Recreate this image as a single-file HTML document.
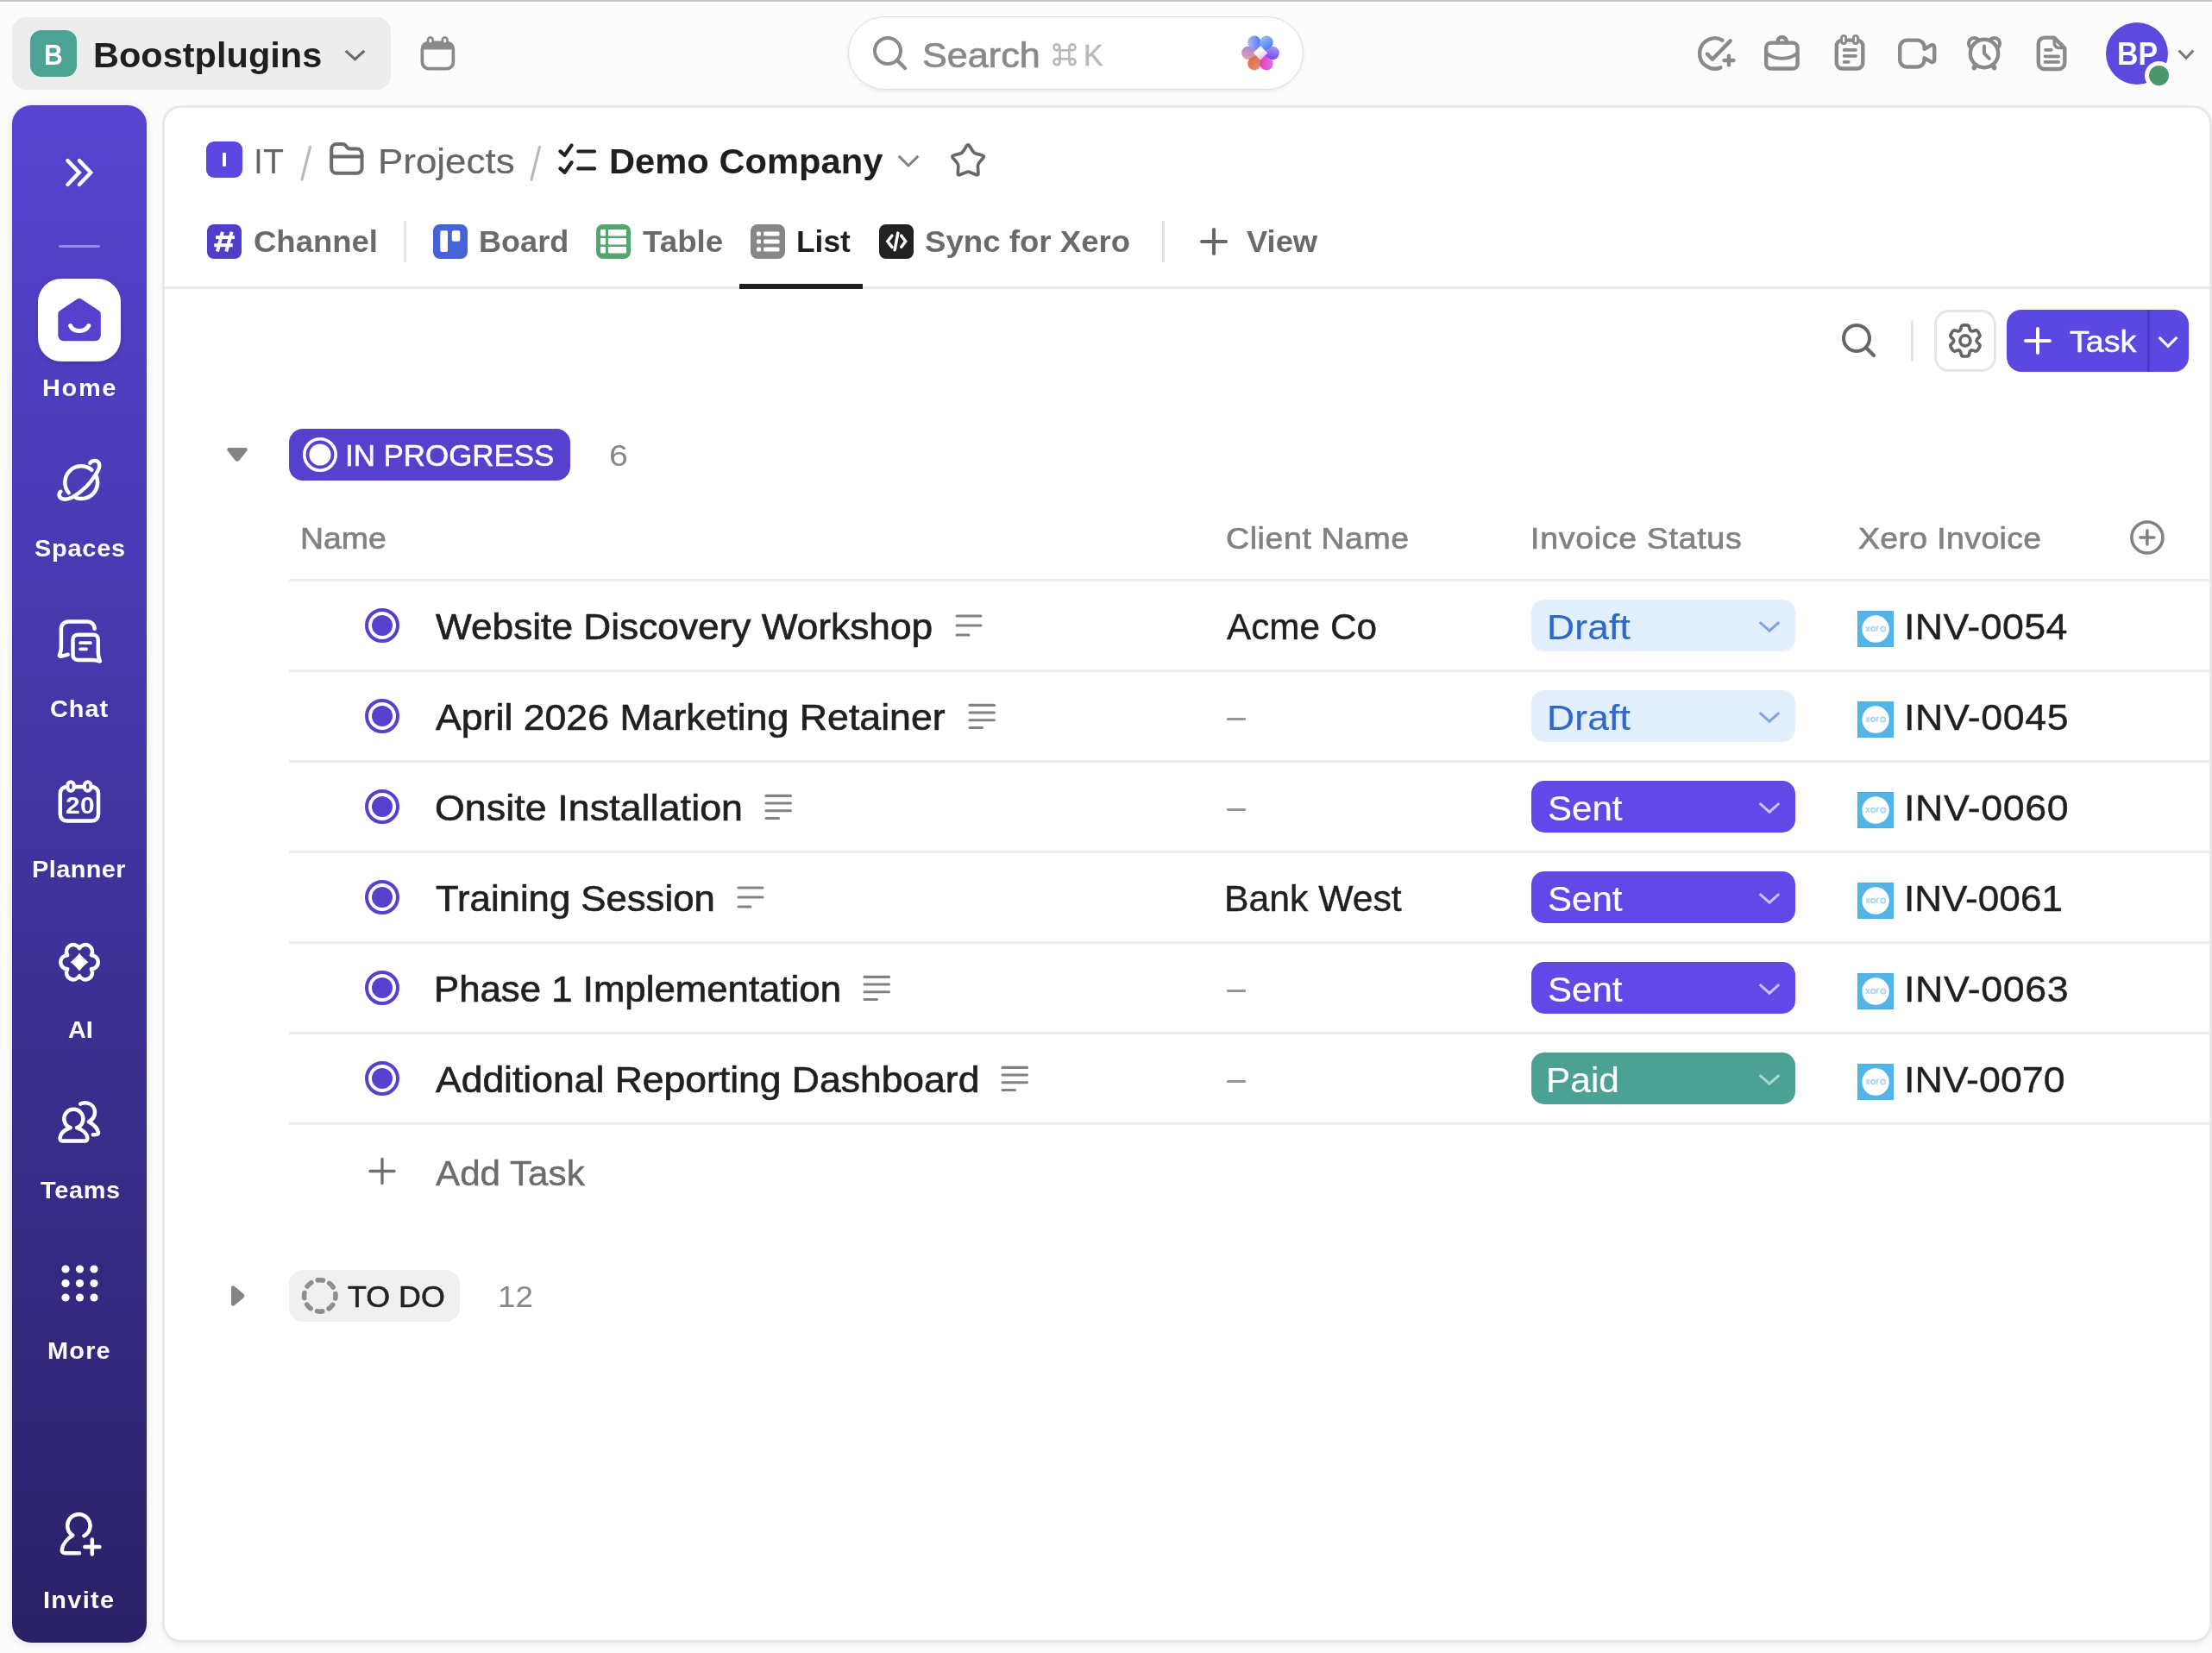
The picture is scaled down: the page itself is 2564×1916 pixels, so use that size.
<!DOCTYPE html>
<html lang="en"><head><meta charset="utf-8"><title>Demo Company - List</title>
<style>
*{box-sizing:border-box;margin:0;padding:0}
html,body{width:2564px;height:1916px;overflow:hidden;background:#fcfcfc;font-family:"Liberation Sans",sans-serif;}
#root{position:absolute;left:0;top:0;width:2564px;height:1916px;will-change:transform}
.a{position:absolute}
.t{position:absolute;white-space:nowrap;line-height:1;transform-origin:0 0;font-family:"Liberation Sans",sans-serif;}
.i{position:absolute;overflow:visible}
#topline{left:0;top:0;width:2564px;height:2px;background:#c5c6c8;box-shadow:0 1px 0 #fff}
#ws{left:14px;top:20px;width:439px;height:84px;border-radius:16px;background:#ededed}
#wsav{left:35px;top:35px;width:54px;height:54px;border-radius:13px;background:#4ba393}
#search{left:983px;top:19px;width:528px;height:85px;border-radius:43px;background:#fff;border:1.5px solid #dcdcdc;box-shadow:0 2px 5px rgba(0,0,0,.07)}
#avatar{left:2441px;top:26px;width:72px;height:72px;border-radius:50%;background:#5c4ade}
#online{left:2485.8px;top:70.8px;width:33.2px;height:33.2px;border-radius:50%;background:#4c966c;border:5.9px solid #fcfcfc}
#sidebar{left:14px;top:122px;width:156px;height:1782px;border-radius:22px;background:linear-gradient(180deg,#5644d1 0%,#2a2167 100%);box-shadow:0 1px 10px rgba(0,0,0,.11)}
#sbdiv{left:68px;top:284px;width:48px;height:3px;border-radius:2px;background:#9a8ce6}
#hometile{left:44px;top:323px;width:96px;height:96px;border-radius:27px;background:#fff;box-shadow:0 2px 6px rgba(0,0,0,.15)}
#panel{left:188px;top:122px;width:2376px;height:1782px;border-radius:22px;background:#fff;border:3px solid #e8e8e8;box-shadow:0 3px 6px rgba(0,0,0,.05)}
#spbadge{left:239px;top:164px;width:42px;height:42px;border-radius:9px;background:#5c48e0}
#spI{left:258px;top:177px;width:4px;height:16px;background:#fff;border-radius:1px}
#tabline{left:191px;top:332px;width:2370px;height:3px;background:#e8e8e8}
#tabactive{left:857px;top:329px;width:143px;height:6px;background:#1f1f1f}
.vsep{width:3px;background:#e4e4e4;border-radius:1px}
#setbtn{left:2242px;top:359px;width:72px;height:72px;border-radius:17px;border:3px solid #e6e6e6;background:#fff}
#taskbtn{left:2326px;top:359px;width:211px;height:72px;border-radius:17px;background:#5b48e0}
#taskdiv{left:2489px;top:359px;width:3px;height:72px;background:#4a39c4}
#ippill{left:335px;top:497px;width:326px;height:60px;border-radius:16px;background:#5541cd}
#tdpill{left:335px;top:1472px;width:198px;height:60px;border-radius:16px;background:#f0f0f0}
.hl{left:335px;width:2226px;height:3px;background:#ededed}
.pill{left:1775px;width:306px;height:60px;border-radius:15px}
.draft{background:#e4effd}.sent{background:#6248e6}.paid{background:#4ba294}
.dash{left:1422px;width:22px;height:3.4px;background:#959595;border-radius:1px}
</style></head>
<body>
<div id="root">
<div id="topline" class="a"></div>
<header>
<div id="ws" class="a"></div><div id="wsav" class="a"></div>
<div id="search" class="a"></div>
<div id="avatar" class="a"></div><div id="online" class="a"></div>
<span class="t" style="left:51.08px;top:47px;font-size:33.2px;font-weight:700;color:#fff;letter-spacing:0.000px;transform:scaleX(0.9095);">B</span>
<span class="t" style="left:107.79px;top:44px;font-size:41.4px;font-weight:700;color:#1f1f1f;letter-spacing:-0.000px;transform:scaleX(1.0031);">Boostplugins</span>
<span class="t" style="left:1068.95px;top:44px;font-size:41px;font-weight:400;color:#8a8a8a;letter-spacing:-0.000px;transform:scaleX(1.0523);-webkit-text-stroke:0.7px #8a8a8a;">Search</span>
<span class="t" style="left:1256.02px;top:47px;font-size:34.5px;font-weight:400;color:#b9b9b9;letter-spacing:0.000px;transform:scaleX(0.9881);-webkit-text-stroke:0.4px #b9b9b9;">K</span>
<span class="t" style="left:2453.71px;top:45px;font-size:36px;font-weight:700;color:#fff;letter-spacing:0.000px;transform:scaleX(0.9426);">BP</span>
<svg class="i" style="left:398px;top:56px" width="27" height="17" viewBox="0 0 27 17" ><path d="M2.600 2.900 L13.500 12.700 L24.400 2.900" fill="none" stroke="#6b6b6b" stroke-width="3.200" stroke-linecap="butt" stroke-linejoin="miter"/></svg>
<svg class="i" style="left:486px;top:41px" width="43" height="42" viewBox="0 0 43 42" >
      <rect x="3.4" y="8.4" width="36" height="30.2" rx="7.5" fill="none" stroke="#8a8a8a" stroke-width="3.7"/>
      <path d="M3.4 16.5 v-1 a7.5 7.5 0 0 1 7.5 -7.5 h21 a7.5 7.5 0 0 1 7.5 7.5 v1 z" fill="#8a8a8a"/>
      <rect x="10.1" y="2.3" width="5.6" height="7.6" rx="2.8" fill="#fcfcfc" stroke="#8a8a8a" stroke-width="2.7"/>
      <rect x="26.9" y="2.3" width="5.6" height="7.6" rx="2.8" fill="#fcfcfc" stroke="#8a8a8a" stroke-width="2.7"/></svg>
<svg class="i" style="left:1010px;top:40px" width="44" height="44" viewBox="0 0 44 44" >
      <circle cx="19" cy="19" r="15" fill="none" stroke="#8a8a8a" stroke-width="4"/>
      <path d="M30 30 L39 39" stroke="#8a8a8a" stroke-width="4.2" stroke-linecap="round"/></svg>
<svg class="i" style="left:1219px;top:50px" width="30" height="27" viewBox="0 0 30 27" >
      <g fill="none" stroke="#b9b9b9" stroke-width="2.7">
      <rect x="9.6" y="8.3" width="10.8" height="10"/>
      <circle cx="6" cy="4.900" r="3.500"/><circle cx="24" cy="4.900" r="3.500"/>
      <circle cx="6" cy="21.700" r="3.500"/><circle cx="24" cy="21.700" r="3.500"/></g></svg>
<svg class="i" style="left:1436px;top:38px" width="50" height="47" viewBox="0 0 50 47" ><defs><linearGradient id="fp5" gradientUnits="objectBoundingBox" x1="0.6" y1="0" x2="0.3" y2="1"><stop offset="0" stop-color="#b07fd4"/><stop offset="1" stop-color="#dba3a6"/></linearGradient><linearGradient id="fp4" gradientUnits="objectBoundingBox" x1="0.2" y1="0" x2="0.8" y2="1"><stop offset="0" stop-color="#d6672f"/><stop offset="1" stop-color="#e98d80"/></linearGradient><linearGradient id="fp0" gradientUnits="objectBoundingBox" x1="0" y1="0.5" x2="1" y2="0.5"><stop offset="0" stop-color="#b3b0f8"/><stop offset="1" stop-color="#4a7df0"/></linearGradient><linearGradient id="fp3" gradientUnits="objectBoundingBox" x1="0" y1="0.5" x2="1" y2="0.5"><stop offset="0" stop-color="#ea38b8"/><stop offset="1" stop-color="#d478f2"/></linearGradient><linearGradient id="fp2" gradientUnits="objectBoundingBox" x1="0.7" y1="0" x2="0.4" y2="1"><stop offset="0" stop-color="#a09cf6"/><stop offset="1" stop-color="#7a3ff0"/></linearGradient><linearGradient id="fp1" gradientUnits="objectBoundingBox" x1="0.2" y1="0" x2="0.7" y2="1"><stop offset="0" stop-color="#9cc0fb"/><stop offset="1" stop-color="#356ff0"/></linearGradient><linearGradient id="fst" x1="0.2" y1="0.1" x2="0.8" y2="0.9"><stop offset="0" stop-color="#fff"/><stop offset="0.5" stop-color="#f4f0ff"/><stop offset="1" stop-color="#e3b6e6"/></linearGradient></defs><path d="M24.70 23.40 L15.07 29.81 A7.7 7.7 0 1 1 15.07 16.99 Z" fill="url(#fp5)"/><path d="M24.85 23.66 L25.58 35.21 A7.7 7.7 0 1 1 14.48 28.80 Z" fill="url(#fp4)"/><path d="M24.85 23.14 L14.48 18.00 A7.7 7.7 0 1 1 25.58 11.59 Z" fill="url(#fp0)"/><path d="M25.15 23.66 L35.52 28.80 A7.7 7.7 0 1 1 24.42 35.21 Z" fill="url(#fp3)"/><path d="M25.30 23.40 L34.93 16.99 A7.7 7.7 0 1 1 34.93 29.81 Z" fill="url(#fp2)"/><path d="M25.15 23.14 L24.42 11.59 A7.7 7.7 0 1 1 35.52 18.00 Z" fill="url(#fp1)"/><path d="M25 14.999999999999998 C27.6 18.0 30.4 20.799999999999997 33.4 23.4 C30.4 26.0 27.6 28.799999999999997 25 31.799999999999997 C22.4 28.799999999999997 19.6 26.0 16.6 23.4 C19.6 20.799999999999997 22.4 18.0 25 14.999999999999998Z" fill="url(#fst)"/></svg>
<svg class="i" style="left:1966px;top:40px" width="48" height="44" viewBox="0 0 48 44" >
      <g fill="none" stroke="#8a8a8a" stroke-width="4.400" stroke-linecap="round" stroke-linejoin="round">
      <path d="M30.500 6.600 A17.700 17.700 0 1 0 28.400 38.400"/>
      <path d="M12.900 22.600 L18.900 28.800 L39.700 7.400"/>
      <path d="M32.500 30 H43.400 M37.950 24.600 V35.400"/></g></svg>
<svg class="i" style="left:2043px;top:39px" width="45" height="45" viewBox="0 0 45 45" >
      <g fill="none" stroke="#8a8a8a" stroke-width="4.400" stroke-linecap="round" stroke-linejoin="round">
      <rect x="4.200" y="10.600" width="36.400" height="29.900" rx="5.600"/>
      <path d="M17.700 10.600 V8.900 A5 5 0 0 1 27.700 8.900 V10.600"/>
      <path d="M5.500 23.300 C14 30.600 31 30.600 39.500 23.300" stroke-width="4"/></g></svg>
<svg class="i" style="left:2123px;top:38px" width="42" height="46" viewBox="0 0 42 46" >
      <g fill="none" stroke="#8a8a8a" stroke-width="4.400" stroke-linecap="round" stroke-linejoin="round">
      <rect x="5.800" y="8.600" width="30.500" height="32.900" rx="6.500"/>
      <path d="M14.600 19.800 H28 M14.600 26.800 H28 M14.600 33.800 H19.600" stroke-width="3.800"/></g>
      <rect x="11.550" y="3.350" width="5.100" height="9.100" rx="2.550" fill="#fcfcfc" stroke="#8a8a8a" stroke-width="2.900"/>
      <rect x="25.450" y="3.350" width="5.100" height="9.100" rx="2.550" fill="#fcfcfc" stroke="#8a8a8a" stroke-width="2.900"/></svg>
<svg class="i" style="left:2198px;top:42px" width="49" height="40" viewBox="0 0 49 40" >
      <path d="M12.200 4.600 H24.600 a8 8 0 0 1 8 8 V14.800 L40.400 10.400 a2.600 2.600 0 0 1 3.800 2.300 V27.400 a2.600 2.600 0 0 1 -3.800 2.300 L32.600 25.300 V27.500 a8 8 0 0 1 -8 8 H12.200 a8 8 0 0 1 -8 -8 V12.600 a8 8 0 0 1 8 -8 Z" fill="none" stroke="#8a8a8a" stroke-width="4.400" stroke-linejoin="round"/></svg>
<svg class="i" style="left:2278px;top:40px" width="45" height="45" viewBox="0 0 45 45" >
      <g fill="none" stroke="#8a8a8a" stroke-width="4.400" stroke-linecap="round" stroke-linejoin="round">
      <circle cx="22" cy="22" r="16.200"/>
      <path d="M21.950 13.400 V21.800 L27.900 27.800" stroke-width="4"/>
      <path d="M6.970 15.860 A6.500 6.500 0 1 1 15.990 6.930" stroke-width="4"/>
      <path d="M28.010 6.930 A6.500 6.500 0 1 1 37.030 15.860" stroke-width="4"/>
      <path d="M11.600 35.800 L10.400 38.600 M32.400 35.800 L33.600 38.600" stroke-width="5.600"/></g></svg>
<svg class="i" style="left:2358px;top:39px" width="41" height="46" viewBox="0 0 41 46" >
      <g fill="none" stroke="#8a8a8a" stroke-width="4.400" stroke-linecap="round" stroke-linejoin="round">
      <path d="M11.800 4.600 H23 L35.300 16.900 V34 a7 7 0 0 1 -7 7 H11.800 a7 7 0 0 1 -7 -7 V11.600 a7 7 0 0 1 7 -7 Z"/>
      <path d="M23.300 5.500 V11 a5.500 5.500 0 0 0 5.500 5.500 H34.500" stroke-width="3.600"/>
      <path d="M12.900 18.800 H19.700 M12.500 26.300 H28.100 M12.500 32.800 H28.100" stroke-width="3.800"/></g></svg>
<svg class="i" style="left:2523px;top:56px" width="22" height="15" viewBox="0 0 22 15" ><path d="M2.600 2.500 L11 11.300 L19.400 2.500" fill="none" stroke="#777" stroke-width="3" stroke-linecap="butt" stroke-linejoin="miter"/></svg>
</header>
<nav>
<div id="sidebar" class="a"></div><div id="sbdiv" class="a"></div><div id="hometile" class="a"></div>
<svg class="i" style="left:74px;top:182px" width="37" height="36" viewBox="0 0 37 36" ><g fill="none" stroke="#fff" stroke-width="4.400" stroke-linecap="round" stroke-linejoin="miter"><path d="M4.400 4.100 L17.700 17.900 L4.400 32"/><path d="M17.900 4.100 L31.200 17.900 L17.900 32"/></g></svg>
<svg class="i" style="left:66px;top:345px" width="52" height="52" viewBox="0 0 52 52" >
      <path d="M22.500 2.200 C24.500 0.600 27.300 0.600 29.300 2.200 L48.500 15 C50.300 16.300 50.800 17.500 50.800 20 V43 C50.800 47.200 48 50.200 44 50.200 H8 C4 50.200 1.300 47.200 1.300 43 V20 C1.300 17.500 1.800 16.300 3.500 15 Z" fill="#5541cd"/>
      <path d="M15.600 32.500 C19 40.500 32.500 40.500 36.900 32.500" fill="none" stroke="#fff" stroke-width="5" stroke-linecap="round"/></svg>
<svg class="i" style="left:64px;top:530px" width="56" height="54" viewBox="0 0 56 54" ><g fill="none" stroke="#fff" stroke-width="4.500" stroke-linecap="round" stroke-linejoin="round" stroke-width="4.400">
      <path d="M42.350 14.720 A18.900 18.900 0 0 0 15.720 41.350"/>
      <path d="M47.190 20.910 A18.900 18.900 0 0 1 24.200 47.120"/>
      <path d="M40.300 6.800 C42.500 3.800 48.300 2.600 50.500 6.500 C52.300 10.500 50.300 15 47.800 18.600 C44 24.500 40.500 29.500 36.500 33.500 C32 38 27.500 41.500 23.200 44.400 C18.500 47.500 14 49 9.900 48.600 C6.500 48.200 4.500 46 4.500 43 C4.500 41.600 5.200 40.700 6.400 39.800"/></g></svg>
<svg class="i" style="left:65px;top:716px" width="56" height="54" viewBox="0 0 56 54" ><g fill="none" stroke="#fff" stroke-width="4.500" stroke-linecap="round" stroke-linejoin="round" stroke-width="4.400">
      <path d="M44.600 12.700 C44.600 8 41 4.500 36.500 4.500 H14.500 C9.500 4.500 5.900 8 5.900 12.700 V34.500 C5.900 38 5 41 4 43 C3.500 44.300 4.500 45 6.500 44.500 C9 44 11.500 43.300 13.700 42.700"/>
      <path d="M25.400 19.700 H43.400 C46.500 19.700 48.800 22 48.800 25.400 V40.500 C48.800 44 49.800 47.500 50.900 50.500 C47.500 49.500 44.500 49 41.500 49 H25.200 C21.800 49 19.500 46.500 19.500 43 V25.400 C19.500 22 21.800 19.700 25.400 19.700 Z"/>
      <path d="M28 29.200 H40 M28 36.300 H35.200" stroke-width="3.700"/></g></svg>
<svg class="i" style="left:65px;top:902px" width="54" height="53" viewBox="0 0 54 53" ><g fill="none" stroke="#fff" stroke-width="4.500" stroke-linecap="round" stroke-linejoin="round">
      <rect x="4.800" y="9.900" width="44.200" height="39.600" rx="7.500"/></g>
      <rect x="13.350" y="4.350" width="7.300" height="10.300" rx="3.650" fill="#43349f" stroke="#fff" stroke-width="4.200"/>
      <rect x="33.050" y="4.350" width="7.300" height="10.300" rx="3.650" fill="#43349f" stroke="#fff" stroke-width="4.200"/></svg>
<svg class="i" style="left:64px;top:1089px" width="56" height="52" viewBox="0 0 56 52" ><path d="M41.85 18.20 A8.0 8.0 0 1 1 41.85 34.20 A8.0 8.0 0 1 1 28.00 42.20 A8.0 8.0 0 1 1 14.15 34.20 A8.0 8.0 0 1 1 14.15 18.20 A8.0 8.0 0 1 1 28.00 10.20 A8.0 8.0 0 1 1 41.85 18.20Z" fill="none" stroke="#fff" stroke-width="4.500" stroke-linejoin="round"/><path d="M28 15.799999999999999 C31.0 19.9 34.3 23.2 38.4 26.2 C34.3 29.2 31.0 32.5 28 36.6 C25.0 32.5 21.7 29.2 17.6 26.2 C21.7 23.2 25.0 19.9 28 15.799999999999999Z" fill="#fff"/></svg>
<svg class="i" style="left:65px;top:1274px" width="54" height="54" viewBox="0 0 54 54" ><g fill="none" stroke="#fff" stroke-width="4.500" stroke-linecap="round" stroke-linejoin="round">
      <path d="M16.700 33.200 A11 11 0 1 1 24 33.200 C31 35.500 36 40 36.300 45 C36.500 47.500 35.500 48.600 33 48.600 H8 C5.500 48.600 4.300 47.500 4.500 45 C5 40 10 35.500 16.700 33.200 Z"/>
      <path d="M28.200 5.600 C31 4.200 34 4 36.500 4.600 C41.500 5.800 45 10 45 15 C45 20 42 24 37.900 26.200 C43 29 48 34 48.900 38.500 C49.200 40.500 47.500 41.500 42.800 41.300"/></g></svg>
<svg class="i" style="left:70.5px;top:1465.5px" width="43" height="43" viewBox="0 0 43 43" ><circle cx="5.0" cy="5.0" r="4.600" fill="#fff"/><circle cx="5.0" cy="21.5" r="4.600" fill="#fff"/><circle cx="5.0" cy="38.0" r="4.600" fill="#fff"/><circle cx="21.5" cy="5.0" r="4.600" fill="#fff"/><circle cx="21.5" cy="21.5" r="4.600" fill="#fff"/><circle cx="21.5" cy="38.0" r="4.600" fill="#fff"/><circle cx="38.0" cy="5.0" r="4.600" fill="#fff"/><circle cx="38.0" cy="21.5" r="4.600" fill="#fff"/><circle cx="38.0" cy="38.0" r="4.600" fill="#fff"/></svg>
<svg class="i" style="left:66px;top:1751px" width="56" height="56" viewBox="0 0 56 56" ><g fill="none" stroke="#fff" stroke-width="4.500" stroke-linecap="round" stroke-linejoin="round" stroke-width="4.900">
      <path d="M31.500 29.200 A13.200 13.200 0 1 0 18.200 28.600 C12 32.500 6.500 39 5.800 45 C5.500 47.800 7 49.200 10 49.300 H26"/>
      <path d="M32.400 41.900 H49.400 M40.800 33.400 V50.500"/></g></svg>
<span class="t" style="left:48.93px;top:437px;font-size:27px;font-weight:700;color:#fff;letter-spacing:1.596px;transform:scaleX(1.0700);">Home</span>
<span class="t" style="left:40.00px;top:623px;font-size:27px;font-weight:700;color:#fff;letter-spacing:0.729px;transform:scaleX(1.0700);">Spaces</span>
<span class="t" style="left:57.93px;top:809px;font-size:27px;font-weight:700;color:#fff;letter-spacing:0.892px;transform:scaleX(1.0700);">Chat</span>
<span class="t" style="left:36.93px;top:995px;font-size:27px;font-weight:700;color:#fff;letter-spacing:0.401px;transform:scaleX(1.0700);">Planner</span>
<span class="t" style="left:78.80px;top:1181px;font-size:27px;font-weight:700;color:#fff;letter-spacing:0.000px;transform:scaleX(1.0667);">AI</span>
<span class="t" style="left:47.00px;top:1367px;font-size:27px;font-weight:700;color:#fff;letter-spacing:0.630px;transform:scaleX(1.0700);">Teams</span>
<span class="t" style="left:55.33px;top:1553px;font-size:27px;font-weight:700;color:#fff;letter-spacing:1.142px;transform:scaleX(1.0700);">More</span>
<span class="t" style="left:49.93px;top:1842px;font-size:27px;font-weight:700;color:#fff;letter-spacing:1.240px;transform:scaleX(1.0700);">Invite</span>
<span class="t" style="left:75.70px;top:920px;font-size:28px;font-weight:700;color:#fff;letter-spacing:0.269px;transform:scaleX(1.0700);">20</span>
</nav>
<main>
<div id="panel" class="a"></div>
<div id="spbadge" class="a"></div><div id="spI" class="a"></div>
<span class="t" style="left:293.65px;top:167px;font-size:41.4px;font-weight:400;color:#666;letter-spacing:0.000px;transform:scaleX(0.9493);">IT</span>
<span class="t" style="left:437.55px;top:167px;font-size:41.2px;font-weight:400;color:#666;letter-spacing:0.000px;transform:scaleX(1.0659);-webkit-text-stroke:0.2px #666;">Projects</span>
<span class="t" style="left:705.95px;top:167px;font-size:40.6px;font-weight:700;color:#1f1f1f;letter-spacing:0.000px;transform:scaleX(1.0274);">Demo Company</span>
<span class="t" style="left:293.97px;top:263px;font-size:35.5px;font-weight:700;color:#6a6a6a;letter-spacing:0.000px;transform:scaleX(1.0279);">Channel</span>
<span class="t" style="left:555.47px;top:263px;font-size:35.5px;font-weight:700;color:#6a6a6a;letter-spacing:0.000px;transform:scaleX(1.0164);">Board</span>
<span class="t" style="left:745.00px;top:263px;font-size:35.5px;font-weight:700;color:#6a6a6a;letter-spacing:-0.000px;transform:scaleX(1.0354);">Table</span>
<span class="t" style="left:923.01px;top:263px;font-size:35.5px;font-weight:700;color:#1f1f1f;letter-spacing:0.000px;transform:scaleX(0.9952);">List</span>
<span class="t" style="left:1071.97px;top:263px;font-size:35.5px;font-weight:700;color:#6a6a6a;letter-spacing:0.000px;transform:scaleX(1.0321);">Sync for Xero</span>
<span class="t" style="left:1445.00px;top:263px;font-size:35.5px;font-weight:700;color:#6a6a6a;letter-spacing:-0.000px;transform:scaleX(1.0230);">View</span>
<div id="tabline" class="a"></div><div id="tabactive" class="a"></div>
<div class="a vsep" style="left:468px;top:256px;height:48px"></div>
<div class="a vsep" style="left:1347px;top:256px;height:48px"></div>
<div class="a vsep" style="left:2215px;top:371px;height:48px"></div>
<div id="setbtn" class="a"></div><div id="taskbtn" class="a"></div><div id="taskdiv" class="a"></div>
<span class="t" style="left:2398.50px;top:379px;font-size:35.8px;font-weight:400;color:#fff;letter-spacing:0.000px;transform:scaleX(1.0515);-webkit-text-stroke:0.45px #fff;">Task</span>
<div id="ippill" class="a"></div>
<span class="t" style="left:400.01px;top:510px;font-size:35px;font-weight:400;color:#fff;letter-spacing:0.000px;transform:scaleX(0.9968);-webkit-text-stroke:0.6px #fff;">IN PROGRESS</span>
<span class="t" style="left:706.39px;top:511px;font-size:35.5px;font-weight:400;color:#888;letter-spacing:0.000px;transform:scaleX(1.1111);">6</span>
<span class="t" style="left:347.86px;top:606px;font-size:35px;font-weight:400;color:#828282;letter-spacing:0.000px;transform:scaleX(1.0679);-webkit-text-stroke:0.7px #828282;">Name</span>
<span class="t" style="left:1420.93px;top:606px;font-size:35px;font-weight:400;color:#828282;letter-spacing:0.569px;transform:scaleX(1.0700);-webkit-text-stroke:0.7px #828282;">Client Name</span>
<span class="t" style="left:1774.09px;top:606px;font-size:35px;font-weight:400;color:#828282;letter-spacing:0.677px;transform:scaleX(1.0700);-webkit-text-stroke:0.7px #828282;">Invoice Status</span>
<span class="t" style="left:2154.40px;top:606px;font-size:35px;font-weight:400;color:#828282;letter-spacing:0.340px;transform:scaleX(1.0700);-webkit-text-stroke:0.7px #828282;">Xero Invoice</span>
<div class="a hl" style="top:671px"></div>
<span class="t" style="left:505.00px;top:706px;font-size:41.8px;font-weight:400;color:#202020;letter-spacing:0.000px;transform:scaleX(1.0584);-webkit-text-stroke:0.65px #202020;">Website Discovery Workshop</span>
<span class="t" style="left:1422.00px;top:706px;font-size:41.8px;font-weight:400;color:#202020;letter-spacing:0.000px;transform:scaleX(1.0121);-webkit-text-stroke:0.4px #202020;">Acme Co</span>
<div class="a pill draft" style="top:695px"></div>
<span class="t" style="left:1792.54px;top:707px;font-size:41.4px;font-weight:400;color:#2f68c8;letter-spacing:0.223px;transform:scaleX(1.0700);-webkit-text-stroke:0.2px #2f68c8;">Draft</span>
<svg class="i" style="left:2037px;top:718px" width="28" height="18" viewBox="0 0 28 18" ><path d="M2.750 3.200 L14 13.200 L25.250 3.200" fill="none" stroke="#7fa4e6" stroke-width="3" stroke-linecap="butt" stroke-linejoin="miter"/></svg>
<span class="t" style="left:2206.79px;top:706px;font-size:41.8px;font-weight:400;color:#202020;letter-spacing:0.401px;transform:scaleX(1.0700);-webkit-text-stroke:0.4px #202020;">INV-0054</span>
<svg class="i" style="left:423px;top:705px" width="40" height="40" viewBox="0 0 40 40" ><circle cx="20" cy="20" r="18" fill="none" stroke="#5541cd" stroke-width="4"/><circle cx="20" cy="20" r="12" fill="#5541cd"/></svg>
<svg class="i" style="left:1107px;top:712px" width="34" height="29" viewBox="0 0 34 29" ><rect x="0.500" y="0.5" width="31" height="3.100" rx="1.500" fill="#828282"/><rect x="0.500" y="11.5" width="31" height="3.100" rx="1.500" fill="#828282"/><rect x="0.500" y="22.5" width="17" height="3.100" rx="1.500" fill="#828282"/></svg>
<svg class="i" style="left:2153px;top:708px" width="42" height="42" viewBox="0 0 42 42" ><rect width="42" height="42" fill="#46ade6"/><rect x="0.800" y="0.800" width="40.400" height="40.400" fill="#53b4e8"/>
      <g style="filter:blur(0.700px)"><circle cx="21.060" cy="21.060" r="15.700" fill="#fff"/>
      <g fill="none" stroke="#a6d9ee" stroke-width="1.700"><path d="M10 18.300 L14 23.700 M14 18.300 L10 23.700"/><circle cx="18.200" cy="21" r="2.400"/><path d="M22.600 23.700 V19 C23.400 18.300 24.400 18.200 25.200 18.500"/><circle cx="29.800" cy="21" r="2.700"/></g></g></svg>
<div class="a hl" style="top:776px"></div>
<span class="t" style="left:505.00px;top:811px;font-size:41.8px;font-weight:400;color:#202020;letter-spacing:0.000px;transform:scaleX(1.0681);-webkit-text-stroke:0.65px #202020;">April 2026 Marketing Retainer</span>
<div class="a dash" style="top:832px"></div>
<div class="a pill draft" style="top:800px"></div>
<span class="t" style="left:1792.54px;top:812px;font-size:41.4px;font-weight:400;color:#2f68c8;letter-spacing:0.223px;transform:scaleX(1.0700);-webkit-text-stroke:0.2px #2f68c8;">Draft</span>
<svg class="i" style="left:2037px;top:823px" width="28" height="18" viewBox="0 0 28 18" ><path d="M2.750 3.200 L14 13.200 L25.250 3.200" fill="none" stroke="#7fa4e6" stroke-width="3" stroke-linecap="butt" stroke-linejoin="miter"/></svg>
<span class="t" style="left:2206.79px;top:811px;font-size:41.8px;font-weight:400;color:#202020;letter-spacing:0.544px;transform:scaleX(1.0700);-webkit-text-stroke:0.4px #202020;">INV-0045</span>
<svg class="i" style="left:423px;top:810px" width="40" height="40" viewBox="0 0 40 40" ><circle cx="20" cy="20" r="18" fill="none" stroke="#5541cd" stroke-width="4"/><circle cx="20" cy="20" r="12" fill="#5541cd"/></svg>
<svg class="i" style="left:1122px;top:814.5px" width="34" height="34" viewBox="0 0 34 34" ><rect x="0.500" y="0.7999999999999998" width="31.5" height="3.100" rx="1.500" fill="#828282"/><rect x="0.500" y="9.5" width="31.5" height="3.100" rx="1.500" fill="#828282"/><rect x="0.500" y="18.2" width="31.5" height="3.100" rx="1.500" fill="#828282"/><rect x="0.500" y="27.0" width="17.5" height="3.100" rx="1.500" fill="#828282"/></svg>
<svg class="i" style="left:2153px;top:813px" width="42" height="42" viewBox="0 0 42 42" ><rect width="42" height="42" fill="#46ade6"/><rect x="0.800" y="0.800" width="40.400" height="40.400" fill="#53b4e8"/>
      <g style="filter:blur(0.700px)"><circle cx="21.060" cy="21.060" r="15.700" fill="#fff"/>
      <g fill="none" stroke="#a6d9ee" stroke-width="1.700"><path d="M10 18.300 L14 23.700 M14 18.300 L10 23.700"/><circle cx="18.200" cy="21" r="2.400"/><path d="M22.600 23.700 V19 C23.400 18.300 24.400 18.200 25.200 18.500"/><circle cx="29.800" cy="21" r="2.700"/></g></g></svg>
<div class="a hl" style="top:881px"></div>
<span class="t" style="left:503.93px;top:916px;font-size:41.8px;font-weight:400;color:#202020;letter-spacing:0.077px;transform:scaleX(1.0700);-webkit-text-stroke:0.65px #202020;">Onsite Installation</span>
<div class="a dash" style="top:937px"></div>
<div class="a pill sent" style="top:905px"></div>
<span class="t" style="left:1793.58px;top:917px;font-size:41.4px;font-weight:400;color:#fff;letter-spacing:0.000px;transform:scaleX(1.0160);-webkit-text-stroke:0.2px #fff;">Sent</span>
<svg class="i" style="left:2037px;top:928px" width="28" height="18" viewBox="0 0 28 18" ><path d="M2.750 3.200 L14 13.200 L25.250 3.200" fill="none" stroke="#c9c0ff" stroke-width="3" stroke-linecap="butt" stroke-linejoin="miter"/></svg>
<span class="t" style="left:2206.79px;top:916px;font-size:41.8px;font-weight:400;color:#202020;letter-spacing:0.544px;transform:scaleX(1.0700);-webkit-text-stroke:0.4px #202020;">INV-0060</span>
<svg class="i" style="left:423px;top:915px" width="40" height="40" viewBox="0 0 40 40" ><circle cx="20" cy="20" r="18" fill="none" stroke="#5541cd" stroke-width="4"/><circle cx="20" cy="20" r="12" fill="#5541cd"/></svg>
<svg class="i" style="left:886px;top:919.5px" width="34" height="34" viewBox="0 0 34 34" ><rect x="0.500" y="0.7999999999999998" width="31.5" height="3.100" rx="1.500" fill="#828282"/><rect x="0.500" y="9.5" width="31.5" height="3.100" rx="1.500" fill="#828282"/><rect x="0.500" y="18.2" width="31.5" height="3.100" rx="1.500" fill="#828282"/><rect x="0.500" y="27.0" width="17.5" height="3.100" rx="1.500" fill="#828282"/></svg>
<svg class="i" style="left:2153px;top:918px" width="42" height="42" viewBox="0 0 42 42" ><rect width="42" height="42" fill="#46ade6"/><rect x="0.800" y="0.800" width="40.400" height="40.400" fill="#53b4e8"/>
      <g style="filter:blur(0.700px)"><circle cx="21.060" cy="21.060" r="15.700" fill="#fff"/>
      <g fill="none" stroke="#a6d9ee" stroke-width="1.700"><path d="M10 18.300 L14 23.700 M14 18.300 L10 23.700"/><circle cx="18.200" cy="21" r="2.400"/><path d="M22.600 23.700 V19 C23.400 18.300 24.400 18.200 25.200 18.500"/><circle cx="29.800" cy="21" r="2.700"/></g></g></svg>
<div class="a hl" style="top:986px"></div>
<span class="t" style="left:504.60px;top:1021px;font-size:41.8px;font-weight:400;color:#202020;letter-spacing:0.000px;transform:scaleX(1.0451);-webkit-text-stroke:0.65px #202020;">Training Session</span>
<span class="t" style="left:1418.94px;top:1021px;font-size:41.8px;font-weight:400;color:#202020;letter-spacing:0.000px;transform:scaleX(1.0215);-webkit-text-stroke:0.4px #202020;">Bank West</span>
<div class="a pill sent" style="top:1010px"></div>
<span class="t" style="left:1793.58px;top:1022px;font-size:41.4px;font-weight:400;color:#fff;letter-spacing:0.000px;transform:scaleX(1.0160);-webkit-text-stroke:0.2px #fff;">Sent</span>
<svg class="i" style="left:2037px;top:1033px" width="28" height="18" viewBox="0 0 28 18" ><path d="M2.750 3.200 L14 13.200 L25.250 3.200" fill="none" stroke="#c9c0ff" stroke-width="3" stroke-linecap="butt" stroke-linejoin="miter"/></svg>
<span class="t" style="left:2206.83px;top:1021px;font-size:41.8px;font-weight:400;color:#202020;letter-spacing:0.000px;transform:scaleX(1.0557);-webkit-text-stroke:0.4px #202020;">INV-0061</span>
<svg class="i" style="left:423px;top:1020px" width="40" height="40" viewBox="0 0 40 40" ><circle cx="20" cy="20" r="18" fill="none" stroke="#5541cd" stroke-width="4"/><circle cx="20" cy="20" r="12" fill="#5541cd"/></svg>
<svg class="i" style="left:853.5px;top:1027px" width="34" height="29" viewBox="0 0 34 29" ><rect x="0.500" y="0.5" width="31" height="3.100" rx="1.500" fill="#828282"/><rect x="0.500" y="11.5" width="31" height="3.100" rx="1.500" fill="#828282"/><rect x="0.500" y="22.5" width="17" height="3.100" rx="1.500" fill="#828282"/></svg>
<svg class="i" style="left:2153px;top:1023px" width="42" height="42" viewBox="0 0 42 42" ><rect width="42" height="42" fill="#46ade6"/><rect x="0.800" y="0.800" width="40.400" height="40.400" fill="#53b4e8"/>
      <g style="filter:blur(0.700px)"><circle cx="21.060" cy="21.060" r="15.700" fill="#fff"/>
      <g fill="none" stroke="#a6d9ee" stroke-width="1.700"><path d="M10 18.300 L14 23.700 M14 18.300 L10 23.700"/><circle cx="18.200" cy="21" r="2.400"/><path d="M22.600 23.700 V19 C23.400 18.300 24.400 18.200 25.200 18.500"/><circle cx="29.800" cy="21" r="2.700"/></g></g></svg>
<div class="a hl" style="top:1091px"></div>
<span class="t" style="left:503.36px;top:1126px;font-size:41.8px;font-weight:400;color:#202020;letter-spacing:0.000px;transform:scaleX(1.0471);-webkit-text-stroke:0.65px #202020;">Phase 1 Implementation</span>
<div class="a dash" style="top:1147px"></div>
<div class="a pill sent" style="top:1115px"></div>
<span class="t" style="left:1793.58px;top:1127px;font-size:41.4px;font-weight:400;color:#fff;letter-spacing:0.000px;transform:scaleX(1.0160);-webkit-text-stroke:0.2px #fff;">Sent</span>
<svg class="i" style="left:2037px;top:1138px" width="28" height="18" viewBox="0 0 28 18" ><path d="M2.750 3.200 L14 13.200 L25.250 3.200" fill="none" stroke="#c9c0ff" stroke-width="3" stroke-linecap="butt" stroke-linejoin="miter"/></svg>
<span class="t" style="left:2206.79px;top:1126px;font-size:41.8px;font-weight:400;color:#202020;letter-spacing:0.544px;transform:scaleX(1.0700);-webkit-text-stroke:0.4px #202020;">INV-0063</span>
<svg class="i" style="left:423px;top:1125px" width="40" height="40" viewBox="0 0 40 40" ><circle cx="20" cy="20" r="18" fill="none" stroke="#5541cd" stroke-width="4"/><circle cx="20" cy="20" r="12" fill="#5541cd"/></svg>
<svg class="i" style="left:1000px;top:1129.5px" width="34" height="34" viewBox="0 0 34 34" ><rect x="0.500" y="0.7999999999999998" width="31.5" height="3.100" rx="1.500" fill="#828282"/><rect x="0.500" y="9.5" width="31.5" height="3.100" rx="1.500" fill="#828282"/><rect x="0.500" y="18.2" width="31.5" height="3.100" rx="1.500" fill="#828282"/><rect x="0.500" y="27.0" width="17.5" height="3.100" rx="1.500" fill="#828282"/></svg>
<svg class="i" style="left:2153px;top:1128px" width="42" height="42" viewBox="0 0 42 42" ><rect width="42" height="42" fill="#46ade6"/><rect x="0.800" y="0.800" width="40.400" height="40.400" fill="#53b4e8"/>
      <g style="filter:blur(0.700px)"><circle cx="21.060" cy="21.060" r="15.700" fill="#fff"/>
      <g fill="none" stroke="#a6d9ee" stroke-width="1.700"><path d="M10 18.300 L14 23.700 M14 18.300 L10 23.700"/><circle cx="18.200" cy="21" r="2.400"/><path d="M22.600 23.700 V19 C23.400 18.300 24.400 18.200 25.200 18.500"/><circle cx="29.800" cy="21" r="2.700"/></g></g></svg>
<div class="a hl" style="top:1196px"></div>
<span class="t" style="left:505.00px;top:1231px;font-size:41.8px;font-weight:400;color:#202020;letter-spacing:0.000px;transform:scaleX(1.0639);-webkit-text-stroke:0.65px #202020;">Additional Reporting Dashboard</span>
<div class="a dash" style="top:1252px"></div>
<div class="a pill paid" style="top:1220px"></div>
<span class="t" style="left:1792.12px;top:1232px;font-size:41.4px;font-weight:400;color:#fff;letter-spacing:0.000px;transform:scaleX(1.0254);-webkit-text-stroke:0.2px #fff;">Paid</span>
<svg class="i" style="left:2037px;top:1243px" width="28" height="18" viewBox="0 0 28 18" ><path d="M2.750 3.200 L14 13.200 L25.250 3.200" fill="none" stroke="#a8d8cf" stroke-width="3" stroke-linecap="butt" stroke-linejoin="miter"/></svg>
<span class="t" style="left:2206.79px;top:1231px;font-size:41.8px;font-weight:400;color:#202020;letter-spacing:0.010px;transform:scaleX(1.0700);-webkit-text-stroke:0.4px #202020;">INV-0070</span>
<svg class="i" style="left:423px;top:1230px" width="40" height="40" viewBox="0 0 40 40" ><circle cx="20" cy="20" r="18" fill="none" stroke="#5541cd" stroke-width="4"/><circle cx="20" cy="20" r="12" fill="#5541cd"/></svg>
<svg class="i" style="left:1160px;top:1234.5px" width="34" height="34" viewBox="0 0 34 34" ><rect x="0.500" y="0.7999999999999998" width="31.5" height="3.100" rx="1.500" fill="#828282"/><rect x="0.500" y="9.5" width="31.5" height="3.100" rx="1.500" fill="#828282"/><rect x="0.500" y="18.2" width="31.5" height="3.100" rx="1.500" fill="#828282"/><rect x="0.500" y="27.0" width="17.5" height="3.100" rx="1.500" fill="#828282"/></svg>
<svg class="i" style="left:2153px;top:1233px" width="42" height="42" viewBox="0 0 42 42" ><rect width="42" height="42" fill="#46ade6"/><rect x="0.800" y="0.800" width="40.400" height="40.400" fill="#53b4e8"/>
      <g style="filter:blur(0.700px)"><circle cx="21.060" cy="21.060" r="15.700" fill="#fff"/>
      <g fill="none" stroke="#a6d9ee" stroke-width="1.700"><path d="M10 18.300 L14 23.700 M14 18.300 L10 23.700"/><circle cx="18.200" cy="21" r="2.400"/><path d="M22.600 23.700 V19 C23.400 18.300 24.400 18.200 25.200 18.500"/><circle cx="29.800" cy="21" r="2.700"/></g></g></svg>
<div class="a hl" style="top:1301px"></div>
<span class="t" style="left:505.00px;top:1340px;font-size:41px;font-weight:400;color:#6c6c6c;letter-spacing:0.000px;transform:scaleX(1.0287);-webkit-text-stroke:0.45px #6c6c6c;">Add Task</span>
<div id="tdpill" class="a"></div>
<span class="t" style="left:402.50px;top:1485px;font-size:35px;font-weight:400;color:#222;letter-spacing:0.000px;transform:scaleX(1.0232);-webkit-text-stroke:0.6px #222;">TO DO</span>
<span class="t" style="left:576.93px;top:1486px;font-size:35.5px;font-weight:400;color:#888;letter-spacing:0.000px;transform:scaleX(1.0352);">12</span>
<svg class="i" style="left:346px;top:168px" width="18" height="42" viewBox="0 0 18 42" ><path d="M13.500 2.300 L4 40.200" stroke="#b9b9b9" stroke-width="3.2" stroke-linecap="round"/></svg>
<svg class="i" style="left:612px;top:168px" width="18" height="42" viewBox="0 0 18 42" ><path d="M13.500 2.300 L4 40.200" stroke="#b9b9b9" stroke-width="3.2" stroke-linecap="round"/></svg>
<svg class="i" style="left:380px;top:163px" width="45" height="42" viewBox="0 0 45 42" ><g fill="none" stroke="#6b6b6b" stroke-width="4" stroke-linecap="round" stroke-linejoin="round">
      <path d="M4.200 32 V10 a6 6 0 0 1 6 -6 H17 C19.500 4 20.500 5 21.500 6.800 C22.500 8.600 23.500 9.400 26 9.400 H33.500 a6 6 0 0 1 6 6 V32 a5.700 5.700 0 0 1 -5.700 5.700 H9.900 a5.700 5.700 0 0 1 -5.700 -5.700 Z"/>
      <path d="M4.200 18.500 H39.500"/></g></svg>
<svg class="i" style="left:645px;top:165px" width="48" height="40" viewBox="0 0 48 40" ><g fill="none" stroke="#222" stroke-width="4.200" stroke-linecap="round" stroke-linejoin="round">
      <path d="M4.400 10.400 L9.600 14.900 L17.600 3.400"/><path d="M4.400 30.300 L9.600 34.800 L17.600 23.300"/>
      <path d="M25.300 10.500 H44 M25.300 30.400 H44"/></g></svg>
<svg class="i" style="left:1039px;top:178px" width="28" height="18" viewBox="0 0 28 18" ><path d="M2.750 2.850 L14 14 L25.250 2.850" fill="none" stroke="#828282" stroke-width="3" stroke-linecap="butt" stroke-linejoin="miter"/></svg>
<svg class="i" style="left:1099px;top:163px" width="46" height="44" viewBox="0 0 46 44" ><path d="M21.51 6.05 Q23.10 3.50 24.69 6.05 L28.60 12.33 Q29.98 14.53 32.50 15.16 L39.68 16.94 Q42.60 17.67 40.67 19.96 L35.90 25.63 Q34.23 27.62 34.41 30.21 L34.94 37.59 Q35.15 40.58 32.37 39.46 L25.51 36.68 Q23.10 35.70 20.69 36.68 L13.83 39.46 Q11.05 40.58 11.26 37.59 L11.79 30.21 Q11.97 27.62 10.30 25.63 L5.53 19.96 Q3.60 17.67 6.52 16.94 L13.70 15.16 Q16.22 14.53 17.60 12.33 Z" fill="none" stroke="#686868" stroke-width="3.700" stroke-linejoin="round"/></svg>
<svg class="i" style="left:240px;top:260px" width="40" height="40" viewBox="0 0 40 40" ><rect width="40" height="40" rx="8" fill="#503ec8"/>
      <g stroke="#fff" stroke-width="4" stroke-linecap="butt"><path d="M17.900 8.700 L11.900 31.500 M28.600 8.700 L22.300 31.500 M10.100 15.100 H32 M8.200 24.300 H29.800"/></g></svg>
<svg class="i" style="left:502px;top:260px" width="40" height="40" viewBox="0 0 40 40" ><rect width="40" height="40" rx="8" fill="#4562d8"/>
      <rect x="8.300" y="7.300" width="8.700" height="24.700" rx="1.800" fill="#fff"/><rect x="21.800" y="7.300" width="9.500" height="12.500" rx="1.800" fill="#fff"/></svg>
<svg class="i" style="left:691px;top:260px" width="40" height="40" viewBox="0 0 40 40" ><rect width="40" height="40" rx="8" fill="#54a66f"/>
      <g fill="#fff"><rect x="5" y="6" width="6" height="7.500" rx="1"/><rect x="14" y="6" width="21" height="7.500" rx="1"/>
      <rect x="5" y="16" width="6" height="7.500" rx="1"/><rect x="14" y="16" width="21" height="7.500" rx="1"/>
      <rect x="5" y="26" width="6" height="7.500" rx="1"/><rect x="14" y="26" width="21" height="7.500" rx="1"/></g></svg>
<svg class="i" style="left:870px;top:260px" width="40" height="40" viewBox="0 0 40 40" ><rect width="40" height="40" rx="8" fill="#878787"/>
      <g fill="#fff"><rect x="7" y="8.500" width="5" height="5" rx="1.500"/><rect x="15" y="8.500" width="18.500" height="5" rx="1.500"/>
      <rect x="7" y="17.500" width="5" height="5" rx="1.500"/><rect x="15" y="17.500" width="18.500" height="5" rx="1.500"/>
      <rect x="7" y="26.500" width="5" height="5" rx="1.500"/><rect x="15" y="26.500" width="18.500" height="5" rx="1.500"/></g></svg>
<svg class="i" style="left:1019px;top:260px" width="40" height="40" viewBox="0 0 40 40" ><rect width="40" height="40" rx="8" fill="#222"/>
      <g fill="none" stroke="#fff" stroke-width="3.500" stroke-linecap="round" stroke-linejoin="miter"><path d="M14.900 13.200 L9.800 19.800 L14.900 26.300 M25.750 13.200 L30.650 19.800 L25.750 26.300 M21.800 10.100 L18.100 29.700"/></g></svg>
<svg class="i" style="left:1389px;top:262px" width="36" height="36" viewBox="0 0 36 36" ><path d="M4 18 H32 M18 4 V32" stroke="#666" stroke-width="4" stroke-linecap="round"/></svg>
<svg class="i" style="left:2133px;top:373px" width="44" height="44" viewBox="0 0 44 44" ><circle cx="19" cy="19" r="15" fill="none" stroke="#666" stroke-width="4"/><path d="M30 30 L39 39" stroke="#666" stroke-width="4.200" stroke-linecap="round"/></svg>
<svg class="i" style="left:2256px;top:373px" width="44" height="44" viewBox="0 0 44 44" ><g fill="none" stroke="#666" stroke-width="3.700" stroke-linejoin="round" stroke-linecap="round">
      <path d="M16.25 9.49 Q16.90 8.00 17.30 5.90 L17.30 5.90 Q17.70 3.80 20.50 3.80 L23.30 3.80 Q26.10 3.80 26.50 5.90 L26.50 5.90 Q26.90 8.00 27.55 9.49 L27.55 9.49 Q28.20 10.99 29.82 10.80 L29.82 10.80 Q31.44 10.62 33.46 9.92 L33.46 9.92 Q35.48 9.21 36.88 11.64 L38.28 14.06 Q39.68 16.49 38.06 17.88 L38.06 17.88 Q36.44 19.28 35.47 20.59 L35.47 20.59 Q34.50 21.90 35.47 23.21 L35.47 23.21 Q36.44 24.52 38.06 25.92 L38.06 25.92 Q39.68 27.31 38.28 29.74 L36.88 32.16 Q35.48 34.59 33.46 33.88 L33.46 33.88 Q31.44 33.18 29.82 33.00 L29.82 33.00 Q28.20 32.81 27.55 34.31 L27.55 34.31 Q26.90 35.80 26.50 37.90 L26.50 37.90 Q26.10 40.00 23.30 40.00 L20.50 40.00 Q17.70 40.00 17.30 37.90 L17.30 37.90 Q16.90 35.80 16.25 34.31 L16.25 34.31 Q15.60 32.81 13.98 33.00 L13.98 33.00 Q12.36 33.18 10.34 33.88 L10.34 33.88 Q8.32 34.59 6.92 32.16 L5.52 29.74 Q4.12 27.31 5.74 25.92 L5.74 25.92 Q7.36 24.52 8.33 23.21 L8.33 23.21 Q9.30 21.90 8.33 20.59 L8.33 20.59 Q7.36 19.28 5.74 17.88 L5.74 17.88 Q4.12 16.49 5.52 14.06 L6.92 11.64 Q8.32 9.21 10.34 9.92 L10.34 9.92 Q12.36 10.62 13.98 10.80 L13.98 10.80 Q15.60 10.99 16.25 9.49 Z"/>
      <circle cx="21.900" cy="21.900" r="5.950"/></g></svg>
<svg class="i" style="left:2344px;top:377px" width="36" height="36" viewBox="0 0 36 36" ><path d="M4 18 H32 M18 4 V32" stroke="#fff" stroke-width="4" stroke-linecap="round"/></svg>
<svg class="i" style="left:2500px;top:388px" width="26" height="17" viewBox="0 0 26 17" ><path d="M2.600 2.900 L13 13.300 L23.400 2.900" fill="none" stroke="#fff" stroke-width="3.200" stroke-linecap="butt" stroke-linejoin="miter"/></svg>
<svg class="i" style="left:261px;top:516px" width="28" height="22" viewBox="0 0 28 22" ><path d="M4.500 3 H23.500 C25.500 3 26.500 5 25 6.800 L16.500 17.500 C15 19.300 13 19.300 11.500 17.500 L3 6.800 C1.500 5 2.500 3 4.500 3 Z" fill="#848484"/></svg>
<svg class="i" style="left:265px;top:1488px" width="20" height="28" viewBox="0 0 20 28" ><path d="M3 4.500 V23.500 C3 25.500 5 26.500 6.800 25 L17 16.500 C18.600 15 18.600 13 17 11.500 L6.800 3 C5 1.500 3 2.500 3 4.500 Z" fill="#848484"/></svg>
<svg class="i" style="left:351px;top:507px" width="40" height="40" viewBox="0 0 40 40" ><circle cx="20" cy="20" r="18.200" fill="none" stroke="#fff" stroke-width="3.600"/><circle cx="20" cy="20" r="12.600" fill="#fff"/></svg>
<svg class="i" style="left:349px;top:1480px" width="44" height="44" viewBox="0 0 44 44" ><circle cx="21.800" cy="21.900" r="18.200" fill="none" stroke="#8e8e8e" stroke-width="5.600" stroke-dasharray="6.300 7.994" stroke-dashoffset="3.150" stroke-linecap="round"/></svg>
<svg class="i" style="left:2467px;top:601px" width="45" height="45" viewBox="0 0 45 45" ><circle cx="21.900" cy="22" r="18.050" fill="none" stroke="#828282" stroke-width="3.600"/><path d="M13.950 22 H29.850 M21.900 14.050 V29.950" stroke="#828282" stroke-width="3.600" stroke-linecap="round"/></svg>
<svg class="i" style="left:426px;top:1340px" width="34" height="35" viewBox="0 0 34 35" ><path d="M3 17.500 H31 M17 3.500 V31.500" stroke="#6e6e6e" stroke-width="3.300" stroke-linecap="round"/></svg>
</main>
</div>
</body></html>
